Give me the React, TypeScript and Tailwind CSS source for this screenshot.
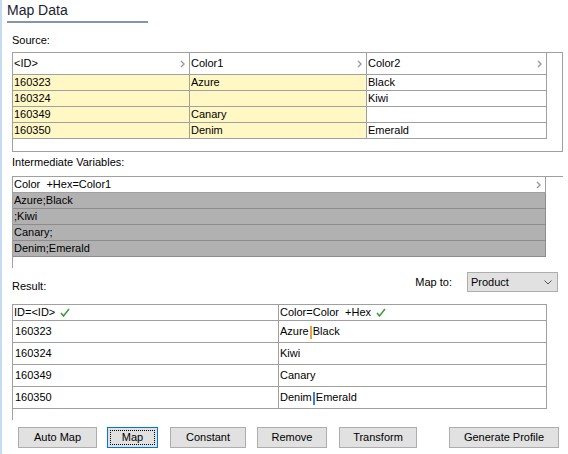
import React from "react";

const FONT = { fontFamily: '"Liberation Sans", Arial, sans-serif' };

function Chevron() {
  return (
    <svg width="5" height="8" viewBox="0 0 5 8" className="shrink-0">
      <path d="M1 1 L4 4 L1 7" fill="none" stroke="#9a9a9a" strokeWidth="1.4" />
    </svg>
  );
}

function Check() {
  return (
    <svg width="10" height="9" viewBox="0 0 10 9" className="ml-[5px] inline-block">
      <path d="M1 5 L3.5 8 L9 1" fill="none" stroke="#3c9a3c" strokeWidth="1.5" />
    </svg>
  );
}

const source = [
  ["160323", "Azure", "Black"],
  ["160324", "", "Kiwi"],
  ["160349", "Canary", ""],
  ["160350", "Denim", "Emerald"],
];

const inter = ["Azure;Black", ";Kiwi", "Canary;", "Denim;Emerald"];

const result: [string, React.ReactNode][] = [
  [
    "160323",
    <>
      Azure<span className="mx-[1px] inline-block h-[13px] w-[2px] bg-[#e9a23b] align-middle" />
      Black
    </>,
  ],
  ["160324", "Kiwi"],
  ["160349", "Canary"],
  [
    "160350",
    <>
      Denim<span className="mx-[1px] inline-block h-[13px] w-[2px] bg-[#3b7fd9] align-middle" />
      Emerald
    </>,
  ],
];

function Button({ label, w, focus }: { label: string; w: string; focus?: boolean }) {
  return (
    <div
      className={`h-[21px] ${w} border ${
        focus ? "border-[#0078d7]" : "border-[#adadad]"
      } bg-[#e1e1e1] p-[2px] text-[11px] text-black`}
    >
      <div
        className={`flex h-full w-full items-center justify-center border ${
          focus ? "border-dotted border-black" : "border-transparent"
        }`}
      >
        {label}
      </div>
    </div>
  );
}

export default function App() {
  return (
    <div
      className="flex h-[454px] w-[568px] overflow-hidden bg-white text-black"
      style={FONT}
    >
      <div className="h-full w-[2px] shrink-0 bg-[#c6daf2]" />

      <div className="flex flex-1 flex-col">
        <div className="h-[21px] pl-[5px] pt-[2px] text-[14px] leading-[17px] text-[#1a2230]">
          Map Data
        </div>
        <div className="ml-[5px] h-[2px] w-[141px] bg-[#8496aa]" />

        <div className="pl-[10px] pt-[10px] pb-[5px] text-[11px] leading-[14px]">Source:</div>

        {/* source */}
        <div className="ml-[10px] h-[100px] w-[551px] border border-[#a0a0a0] text-[11px]">
          <div className="flex">
            {["<ID>", "Color1", "Color2"].map((h, i) => (
              <div
                key={h}
                className={`flex h-[22px] items-center justify-between border-r border-b border-[#a0a0a0] pl-[1px] pr-[4px] ${
                  i === 0 ? "w-[177px]" : i === 1 ? "w-[177px]" : "w-[180px]"
                }`}
              >
                <span>{h}</span>
                <Chevron />
              </div>
            ))}
          </div>
          {source.map((r) => (
            <div key={r[0]} className="flex">
              <div className="h-[16px] w-[177px] border-r border-b border-[#a0a0a0] bg-[#fff8c5] pl-[1px] leading-[15px]">
                {r[0]}
              </div>
              <div className="h-[16px] w-[177px] border-r border-b border-[#a0a0a0] bg-[#fff8c5] pl-[1px] leading-[15px]">
                {r[1]}
              </div>
              <div className="h-[16px] w-[180px] border-r border-b border-[#a0a0a0] pl-[1px] leading-[15px]">
                {r[2]}
              </div>
            </div>
          ))}
        </div>

        <div className="pl-[10px] pt-[3px] pb-[7px] text-[11px] leading-[14px]">
          Intermediate Variables:
        </div>

        {/* intermediate */}
        <div className="ml-[10px] h-[92px] w-[551px] border-t border-l border-[#a0a0a0] text-[11px]">
          <div className="flex h-[16px] w-[533px] items-center justify-between border-r border-b border-[#a0a0a0] pl-[1px] pr-[4px]">
            <span>Color&nbsp;&nbsp;+Hex=Color1</span>
            <Chevron />
          </div>
          {inter.map((v) => (
            <div
              key={v}
              className="h-[16px] w-[533px] border-r border-b border-[#8c8c8c] bg-[#b1b1b1] pl-[1px] leading-[15px]"
            >
              {v}
            </div>
          ))}
        </div>

        <div className="flex h-[36px] items-start justify-between pr-[10px] text-[11px]">
          <div className="pl-[10px] pt-[11px] leading-[14px]">Result:</div>
          <div className="mt-[4px] flex items-center gap-[15px]">
            <span>Map to:</span>
            <div className="flex h-[20px] w-[91px] items-center justify-between border border-[#adadad] bg-[#e1e1e1] pl-[3px] pr-[5px]">
              <span>Product</span>
              <svg width="8" height="5" viewBox="0 0 8 5">
                <path d="M0.5 0.5 L4 4 L7.5 0.5" fill="none" stroke="#555" strokeWidth="1" />
              </svg>
            </div>
          </div>
        </div>

        {/* result */}
        <div className="ml-[10px] h-[116px] border-l border-[#a0a0a0] text-[11px]">
          <div className="w-[534px] border-t border-[#a0a0a0]">
            <div className="flex">
              <div className="flex h-[16px] w-[266px] items-center border-r border-b border-[#a0a0a0] pl-[1px]">
                ID=&lt;ID&gt;
                <Check />
              </div>
              <div className="flex h-[16px] w-[268px] items-center border-r border-b border-[#a0a0a0] pl-[1px]">
                Color=Color&nbsp;&nbsp;+Hex
                <Check />
              </div>
            </div>
            {result.map(([id, c]) => (
              <div key={id} className="flex">
                <div className="h-[22px] w-[266px] border-r border-b border-[#a0a0a0] pl-[2px] leading-[21px]">
                  {id}
                </div>
                <div className="h-[22px] w-[268px] border-r border-b border-[#a0a0a0] pl-[1px] leading-[21px]">
                  {c}
                </div>
              </div>
            ))}
          </div>
        </div>

        <div className="mt-[7px] flex pl-[16px]">
          <Button label="Auto Map" w="w-[79px]" />
          <div className="ml-[10px]">
            <Button label="Map" w="w-[51px]" focus />
          </div>
          <div className="ml-[12px]">
            <Button label="Constant" w="w-[76px]" />
          </div>
          <div className="ml-[11px]">
            <Button label="Remove" w="w-[70px]" />
          </div>
          <div className="ml-[12px]">
            <Button label="Transform" w="w-[78px]" />
          </div>
          <div className="ml-[32px]">
            <Button label="Generate Profile" w="w-[110px]" />
          </div>
        </div>
      </div>
    </div>
  );
}
